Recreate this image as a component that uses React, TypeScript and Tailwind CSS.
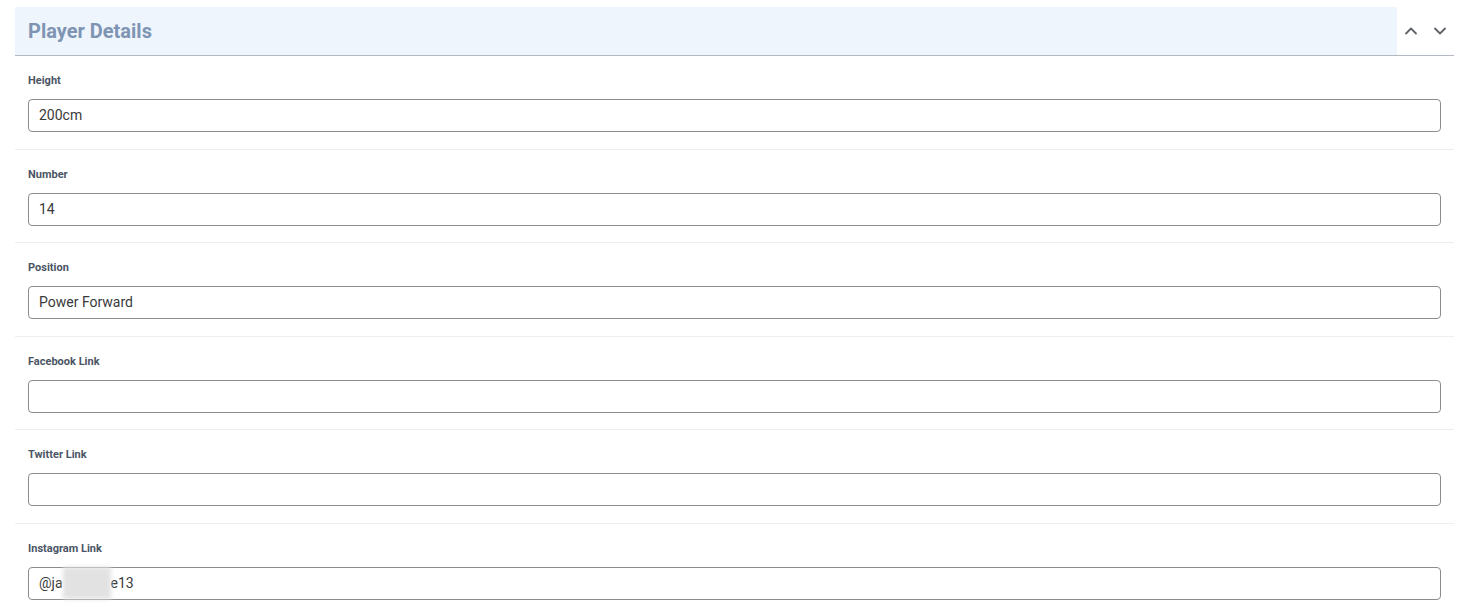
import { ChevronUp, ChevronDown } from 'lucide-react'

const fields = [
  { label: 'Height', value: '200cm' },
  { label: 'Number', value: '14' },
  { label: 'Position', value: 'Power Forward' },
  { label: 'Facebook Link', value: '' },
  { label: 'Twitter Link', value: '' },
]

function Field({ label, children, last }: { label: string; children: React.ReactNode; last?: boolean }) {
  return (
    <div className={`pl-[13px] pr-[13px] pt-[17px] pb-[16.5px] ${last ? '' : 'border-b border-[#eceef0]'}`}>
      <div className="text-[11px] leading-[16px] font-bold text-[#4b5565]">{label}</div>
      <div className="mt-[10px] flex h-[33px] items-center rounded-[4px] border border-[#8c8c8c] px-[10px] text-[14px] text-[#3a3a3a]">
        {children}
      </div>
    </div>
  )
}

export default function App() {
  return (
    <div className="min-h-screen bg-white pl-[15px] pr-[7px] pt-[7px] font-['Roboto',sans-serif]">
      <div className="flex h-[49px] items-stretch border-b border-[#b3bac4]">
        <div className="flex flex-1 items-center bg-[#eef5fd] pl-[13px]">
          <h2 className="text-[20px] font-bold text-[#7e94b3]">Player Details</h2>
        </div>
        <div className="flex w-[57px] items-center justify-center gap-[9px] text-[#5f6368]">
          <ChevronUp size={20} strokeWidth={2.2} />
          <ChevronDown size={20} strokeWidth={2.2} />
        </div>
      </div>
      {fields.map((f) => (
        <Field key={f.label} label={f.label}>
          {f.value}
        </Field>
      ))}
      <Field label="Instagram Link" last>
        <span>@ja</span>
        <span className="inline-block h-[32px] w-[48px] bg-[#e2e2e2] blur-[2px]" />
        <span>e13</span>
      </Field>
    </div>
  )
}
